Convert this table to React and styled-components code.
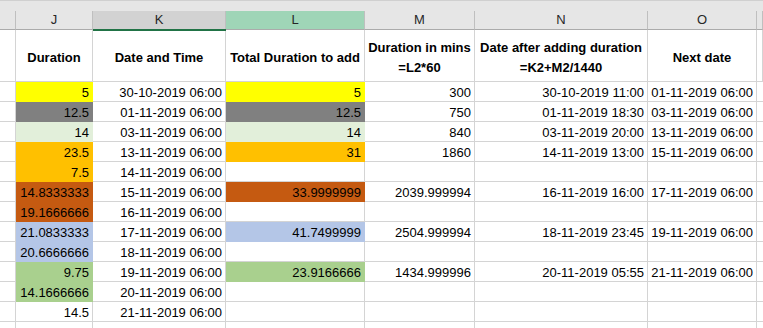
import React from "react";
import styled, { createGlobalStyle } from "styled-components";

const Global = createGlobalStyle`
  html, body { margin: 0; padding: 0; background: #fff; }
  body { width: 763px; height: 328px; overflow: hidden; }
  * { box-sizing: border-box; }
`;

const COLS = "16px 77px 133px 139px 110px 173px 109px 1fr";

const Sheet = styled.div`
  width: 763px;
  height: 328px;
  overflow: hidden;
  font-family: "Liberation Sans", Arial, sans-serif;
  color: #000;
  background: #fff;
`;

const TopBand = styled.div`
  height: 11px;
  background: #e6e6e6;
  border-top: 1px solid #d0d0d0;
`;

const HeadRow = styled.div`
  display: grid;
  grid-template-columns: ${COLS};
  height: 19px;
  background: #e6e6e6;
`;

const ColHead = styled.div`
  position: relative;
  height: 19px;
  border-right: 1px solid #bfbfbf;
  border-bottom: 1px solid #ababab;
  background: ${(p) => (p.$selected ? "#d2d2d2" : p.$active ? "#9fd5b7" : "#e6e6e6")};
  color: #262626;
  font-size: 13px;
  line-height: 18px;
  text-align: center;
  ${(p) =>
    p.$selected &&
    `
    &::after {
      content: "";
      position: absolute;
      left: 0;
      right: -1px;
      bottom: -2px;
      height: 2px;
      background: #217346;
      z-index: 2;
    }
  `}
`;

const Row = styled.div`
  display: grid;
  grid-template-columns: ${COLS};
`;

const Cell = styled.div`
  height: 20px;
  padding: 1px 3px 0;
  line-height: 19px;
  font-size: 13px;
  text-align: right;
  white-space: nowrap;
  overflow: hidden;
  background: ${(p) => p.$fill || "#fff"};
  border-right: 1px solid ${(p) => p.$fill || "#d4d4d4"};
  border-bottom: 1px solid ${(p) => p.$fill || "#d4d4d4"};
`;

const HeaderCell = styled.div`
  height: 52px;
  padding: 4px 0 0;
  display: flex;
  flex-direction: column;
  align-items: center;
  justify-content: center;
  font-size: 13px;
  font-weight: bold;
  line-height: 20px;
  white-space: nowrap;
  border-right: 1px solid #d4d4d4;
  border-bottom: 1px solid #d4d4d4;
`;

const FILLS = {
  y: "#ffff00",
  g: "#808080",
  lg: "#e2efda",
  o: "#ffc000",
  d: "#c55a11",
  b: "#b4c6e7",
  gr: "#a9d08e",
};

const rows = [
  { j: "5", jf: "y", k: "30-10-2019 06:00", l: "5", lf: "y", m: "300", n: "30-10-2019 11:00", o: "01-11-2019 06:00" },
  { j: "12.5", jf: "g", k: "01-11-2019 06:00", l: "12.5", lf: "g", m: "750", n: "01-11-2019 18:30", o: "03-11-2019 06:00" },
  { j: "14", jf: "lg", k: "03-11-2019 06:00", l: "14", lf: "lg", m: "840", n: "03-11-2019 20:00", o: "13-11-2019 06:00" },
  { j: "23.5", jf: "o", k: "13-11-2019 06:00", l: "31", lf: "o", m: "1860", n: "14-11-2019 13:00", o: "15-11-2019 06:00" },
  { j: "7.5", jf: "o", k: "14-11-2019 06:00" },
  { j: "14.8333333", jf: "d", k: "15-11-2019 06:00", l: "33.9999999", lf: "d", m: "2039.999994", n: "16-11-2019 16:00", o: "17-11-2019 06:00" },
  { j: "19.1666666", jf: "d", k: "16-11-2019 06:00" },
  { j: "21.0833333", jf: "b", k: "17-11-2019 06:00", l: "41.7499999", lf: "b", m: "2504.999994", n: "18-11-2019 23:45", o: "19-11-2019 06:00" },
  { j: "20.6666666", jf: "b", k: "18-11-2019 06:00" },
  { j: "9.75", jf: "gr", k: "19-11-2019 06:00", l: "23.9166666", lf: "gr", m: "1434.999996", n: "20-11-2019 05:55", o: "21-11-2019 06:00" },
  { j: "14.1666666", jf: "gr", k: "20-11-2019 06:00" },
  { j: "14.5", k: "21-11-2019 06:00" },
  {},
];

export default function App() {
  return (
    <Sheet>
      <Global />
      <TopBand />
      <HeadRow>
        <ColHead />
        <ColHead>J</ColHead>
        <ColHead $selected>K</ColHead>
        <ColHead $active>L</ColHead>
        <ColHead>M</ColHead>
        <ColHead>N</ColHead>
        <ColHead>O</ColHead>
        <ColHead />
      </HeadRow>
      <Row>
        <HeaderCell />
        <HeaderCell>Duration</HeaderCell>
        <HeaderCell>Date and Time</HeaderCell>
        <HeaderCell>Total Duration to add</HeaderCell>
        <HeaderCell>
          <span>Duration in mins</span>
          <span>=L2*60</span>
        </HeaderCell>
        <HeaderCell>
          <span>Date after adding duration</span>
          <span>=K2+M2/1440</span>
        </HeaderCell>
        <HeaderCell>Next date</HeaderCell>
        <HeaderCell />
      </Row>
      {rows.map((r, i) => (
        <Row key={i}>
          <Cell />
          <Cell $fill={FILLS[r.jf]}>{r.j}</Cell>
          <Cell>{r.k}</Cell>
          <Cell $fill={FILLS[r.lf]}>{r.l}</Cell>
          <Cell>{r.m}</Cell>
          <Cell>{r.n}</Cell>
          <Cell>{r.o}</Cell>
          <Cell />
        </Row>
      ))}
    </Sheet>
  );
}
